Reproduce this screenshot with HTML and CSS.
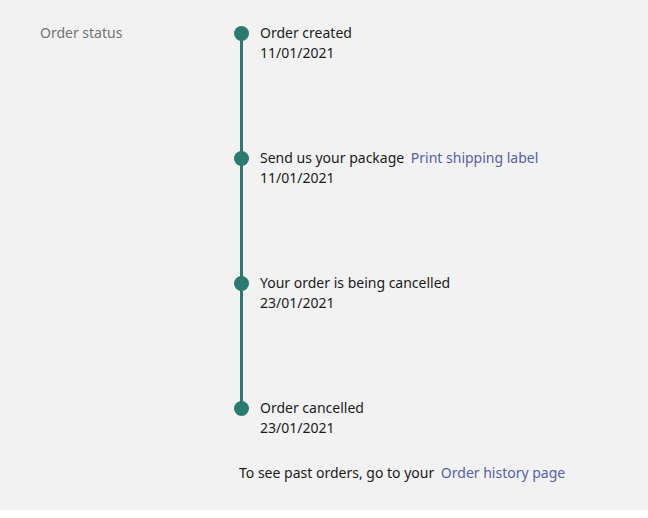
FILE: index.html
```html
<!DOCTYPE html>
<html lang="en">
<head>
    <meta charset="UTF-8">
    <meta name="viewport" content="width=device-width, initial-scale=1.0">
    <title>Order status</title>
    <link rel="stylesheet" href="styles.css">
</head>
<body>
    <div class="page">
        <div class="status-row">
            <div class="status-label">Order status</div>
            <div class="status-main">
                <ol class="timeline">
                    <li class="step">
                        <span class="dot"></span>
                        <div class="step-text">
                            <div class="step-title">Order created</div>
                            <div class="step-date">11/01/2021</div>
                        </div>
                    </li>
                    <li class="step">
                        <span class="dot"></span>
                        <div class="step-text">
                            <div class="step-title">Send us your package <a href="#" class="link">Print shipping label</a></div>
                            <div class="step-date">11/01/2021</div>
                        </div>
                    </li>
                    <li class="step">
                        <span class="dot"></span>
                        <div class="step-text">
                            <div class="step-title">Your order is being cancelled</div>
                            <div class="step-date">23/01/2021</div>
                        </div>
                    </li>
                    <li class="step last">
                        <span class="dot"></span>
                        <div class="step-text">
                            <div class="step-title">Order cancelled</div>
                            <div class="step-date">23/01/2021</div>
                        </div>
                    </li>
                </ol>
                <p class="history">To see past orders, go to your <a href="#" class="link">Order history page</a></p>
            </div>
        </div>
    </div>
</body>
</html>
```

FILE: styles.css
```css
html, body { margin: 0; padding: 0; background: #fff; }
body { font-family: "Noto Sans", "Open Sans", sans-serif; font-size: 14px; line-height: 20px; color: #1b1b1b; }
.page { background: #f2f2f2; height: 510px; padding: 23px 0 0 40px; box-sizing: border-box; }
.status-row { display: flex; }
.status-label { width: 194px; color: #737373; }
.status-main { display: flex; flex-direction: column; }
.timeline { list-style: none; margin: 0; padding: 0; }
.step { position: relative; display: flex; height: 125px; }
.step.last { height: 50px; }
.step::before { content: ""; position: absolute; left: 6px; top: 11px; width: 3px; height: 125px; background: #2a7a6f; }
.step.last::before { display: none; }
.dot { width: 15px; height: 15px; border-radius: 50%; background: #2a7a6f; margin-top: 3px; flex: none; position: relative; }
.step-text { margin-left: 11px; }
.link { color: #5661a6; text-decoration: none; margin-left: 3px; }
.history { margin: 15px 0 0 5px; }
```
